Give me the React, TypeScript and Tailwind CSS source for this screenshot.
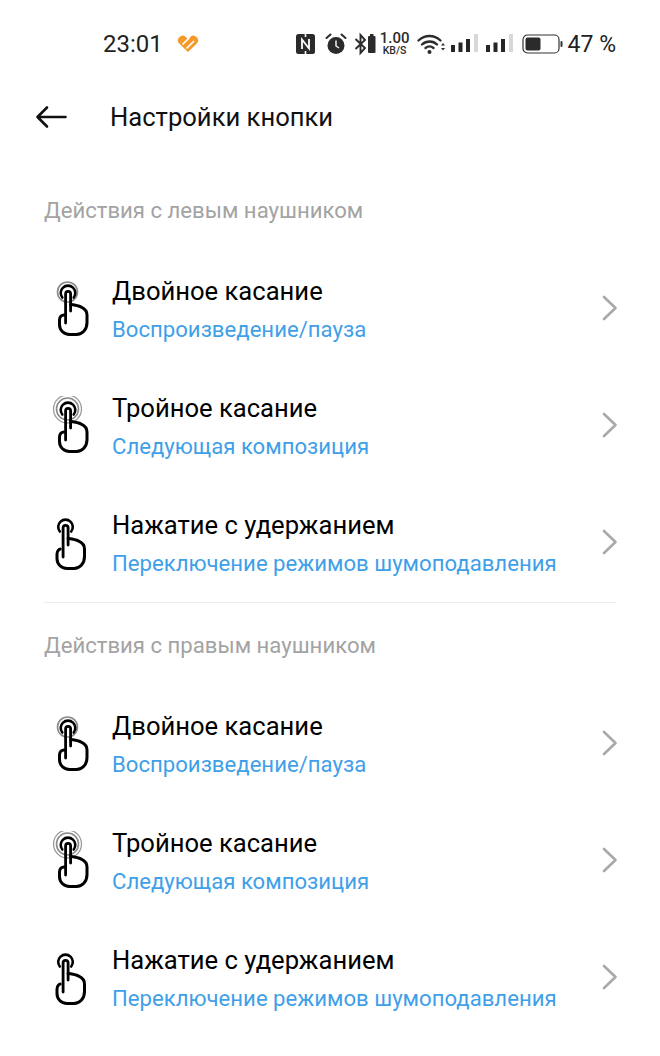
const font = { fontFamily: '"Roboto", "Noto Sans", sans-serif' };

// hand pointer with 0, 1 or 2 extra rings round the fingertip
function TapIcon({ rings }: { rings: number }) {
  const dx = rings === 0 ? -2.5 : 0;
  return (
    <svg width="44" height="60" viewBox="0 0 44 60" fill="none" className="shrink-0">
      {rings === 2 && <circle cx="18.500" cy="13" r="14" stroke="#9a9a9a" strokeWidth="1.300" />}
      {rings >= 1 && <circle cx="18.500" cy="13" r={rings === 2 ? 11 : 10} stroke="#8a8a8a" strokeWidth="1.600" />}
      <g transform={`translate(${dx} 0)`}>
        <path d="M13.300 18.500a7.300 7.300 0 1 1 11.400 0" stroke="#000" strokeWidth="2.600" strokeLinecap="round" />
        <path d="M16.600 44V14.800a2.500 2.500 0 0 1 5 0V32" stroke="#000" strokeWidth="2.800" strokeLinecap="round" />
      </g>
      <path
        d={`M${21.6 + dx} 25.500c5.500 0.800 16.400 2 16.400 10.500v7.500c0 7.500-5 12-10.500 12h-7c-6 0-10-4.500-10-10v-4.500c0-3.500 2.500-5 ${4.500 + dx / 2}-5`}
        stroke="#000"
        strokeWidth="3"
        strokeLinecap="round"
        strokeLinejoin="round"
      />
    </svg>
  );
}

function Row({ title, value, rings }: { title: string; value: string; rings: number }) {
  return (
    <div className="h-[117px] flex items-start pl-[49px] pr-[42px]">
      <div className="mt-[27px]">
        <TapIcon rings={rings} />
      </div>
      <div className="ml-[19px] flex-1 pt-[23px]">
        <div className="text-[25.6px] leading-[32px] text-black">{title}</div>
        <div className="mt-[6px] text-[22.15px] leading-[32px] text-[#3f9fe8] whitespace-nowrap">{value}</div>
      </div>
      <svg width="16" height="28" viewBox="0 0 16 28" fill="none" className="mt-[42px] shrink-0">
        <path d="M2 3l11.500 11L2 25" stroke="#a9a9a9" strokeWidth="2.600" strokeLinecap="round" strokeLinejoin="round" />
      </svg>
    </div>
  );
}

function Signal() {
  return (
    <svg width="30" height="20" viewBox="0 0 30 20" fill="#262626">
      <rect x="0" y="11" width="4" height="7" />
      <rect x="7.500" y="8.500" width="4" height="9.500" />
      <rect x="15" y="5" width="4" height="13" />
      <rect x="23" y="0" width="4" height="18" fill="#d8d8d8" />
    </svg>
  );
}

function StatusBar() {
  return (
    <div className="h-[88px] flex items-center pl-[103px] pr-[44px] text-[#222]">
      <span className="text-[24px]">23:01</span>
      <svg width="24" height="20" viewBox="0 0 24 20" fill="none" className="ml-[13px]">
        <path d="M12 18 3.200 9.500a4.600 4.600 0 0 1 6.500-6.500L12 5.300l2.300-2.300a4.600 4.600 0 0 1 6.500 6.500z" fill="#f39a2b" />
        <path d="M6.500 10.500 13.500 3.500M10.500 14.500 18 7" stroke="#fff" strokeWidth="1.600" />
      </svg>
      <div className="flex-1" />
      {/* NFC */}
      <svg width="19" height="20" viewBox="0 0 19 20" className="mr-[10px]">
        <rect width="19" height="20" rx="2.500" fill="#2b2b2b" />
        <path d="M6 15V5.500l7 9V5" stroke="#fff" strokeWidth="1.800" fill="none" />
        <path d="M9.500 0v3M9.500 17v3" stroke="#fff" strokeWidth="1.600" />
      </svg>
      {/* alarm */}
      <svg width="22" height="22" viewBox="0 0 22 22" className="mr-[7px]">
        <circle cx="11" cy="12.500" r="8.500" fill="#2b2b2b" />
        <path d="M11 7.500v5.500l3 2" stroke="#fff" strokeWidth="1.400" fill="none" />
        <path d="M1.500 5 5.500 1.500M20.500 5l-4-3.500" stroke="#2b2b2b" strokeWidth="2" strokeLinecap="round" />
      </svg>
      {/* bluetooth + battery */}
      <svg width="22" height="24" viewBox="0 0 22 24" className="mr-[4px]">
        <path d="M1.500 7 11 16l-4.500 5V3L11 8l-9.500 9" stroke="#2b2b2b" strokeWidth="1.900" fill="none" />
        <rect x="14" y="4" width="7.500" height="17" rx="1" fill="#2b2b2b" />
        <rect x="16" y="2" width="3.500" height="3" fill="#2b2b2b" />
      </svg>
      <div className="w-[30px] flex flex-col items-center mr-[7px] text-[#2b2b2b]">
        <span className="text-[15px] leading-[13px] font-medium">1.00</span>
        <span className="text-[10.500px] leading-[10px] font-medium pt-[1px]">KB/S</span>
      </div>
      {/* wifi */}
      <svg width="29" height="22" viewBox="0 0 29 22" fill="none" className="mr-[5px]">
        <path d="M1.500 7.500c6.500-6 15.500-6 22 0M5 11.500c4.500-4 11-4 15 0M8.500 15c2.500-2 5.500-2 8 0" stroke="#2b2b2b" strokeWidth="2.300" strokeLinecap="round" />
        <circle cx="12.500" cy="19" r="2" fill="#2b2b2b" />
        <path d="M24 12.500 26 10l2 2.500zM24 15l2 2.500 2-2.500z" fill="#2b2b2b" />
      </svg>
      <Signal />
      <div className="w-[5px]" />
      <Signal />
      {/* battery */}
      <svg width="41" height="20" viewBox="0 0 41 20" fill="none" className="ml-[6px] mr-[5px]">
        <rect x="1" y="1" width="36" height="18" rx="4.500" stroke="#333" strokeWidth="1.200" />
        <rect x="3.500" y="3.500" width="15" height="13" rx="2" fill="#2b2b2b" />
        <rect x="38.500" y="7" width="2" height="6" rx="1" fill="#333" />
      </svg>
      <span className="text-[23px] leading-[30px] pt-[2px] whitespace-nowrap">47 %</span>
    </div>
  );
}

const rows = [
  { title: "Двойное касание", value: "Воспроизведение/пауза", rings: 1 },
  { title: "Тройное касание", value: "Следующая композиция", rings: 2 },
  { title: "Нажатие с удержанием", value: "Переключение режимов шумоподавления", rings: 0 },
];

export default function App() {
  return (
    <div className="w-[660px] h-[1056px] overflow-hidden bg-white" style={font}>
      <StatusBar />

      <div className="h-[58px] flex items-center pl-[34px]">
        <svg width="34" height="26" viewBox="0 0 34 26" fill="none">
          <path d="M31.500 13H3.500M13 3.500 3.500 13l9.500 9.500" stroke="#111" strokeWidth="2.600" strokeLinecap="round" strokeLinejoin="round" />
        </svg>
        <h1 className="ml-[42px] text-[25.600px] leading-[32px] text-[#111]">Настройки кнопки</h1>
      </div>

      <div className="h-[106px] pt-[48px] pl-[44px] text-[22.150px] leading-[32px] text-[#a3a3a3]">
        Действия с левым наушником
      </div>
      {rows.map((r) => (
        <Row key={r.title} {...r} />
      ))}

      <div className="mx-[44px] h-px bg-[#ececec] -mt-px" />

      <div className="h-[84px] pt-[26px] pl-[44px] text-[22.150px] leading-[32px] text-[#a3a3a3]">
        Действия с правым наушником
      </div>
      {rows.map((r) => (
        <Row key={r.title} {...r} />
      ))}
    </div>
  );
}
